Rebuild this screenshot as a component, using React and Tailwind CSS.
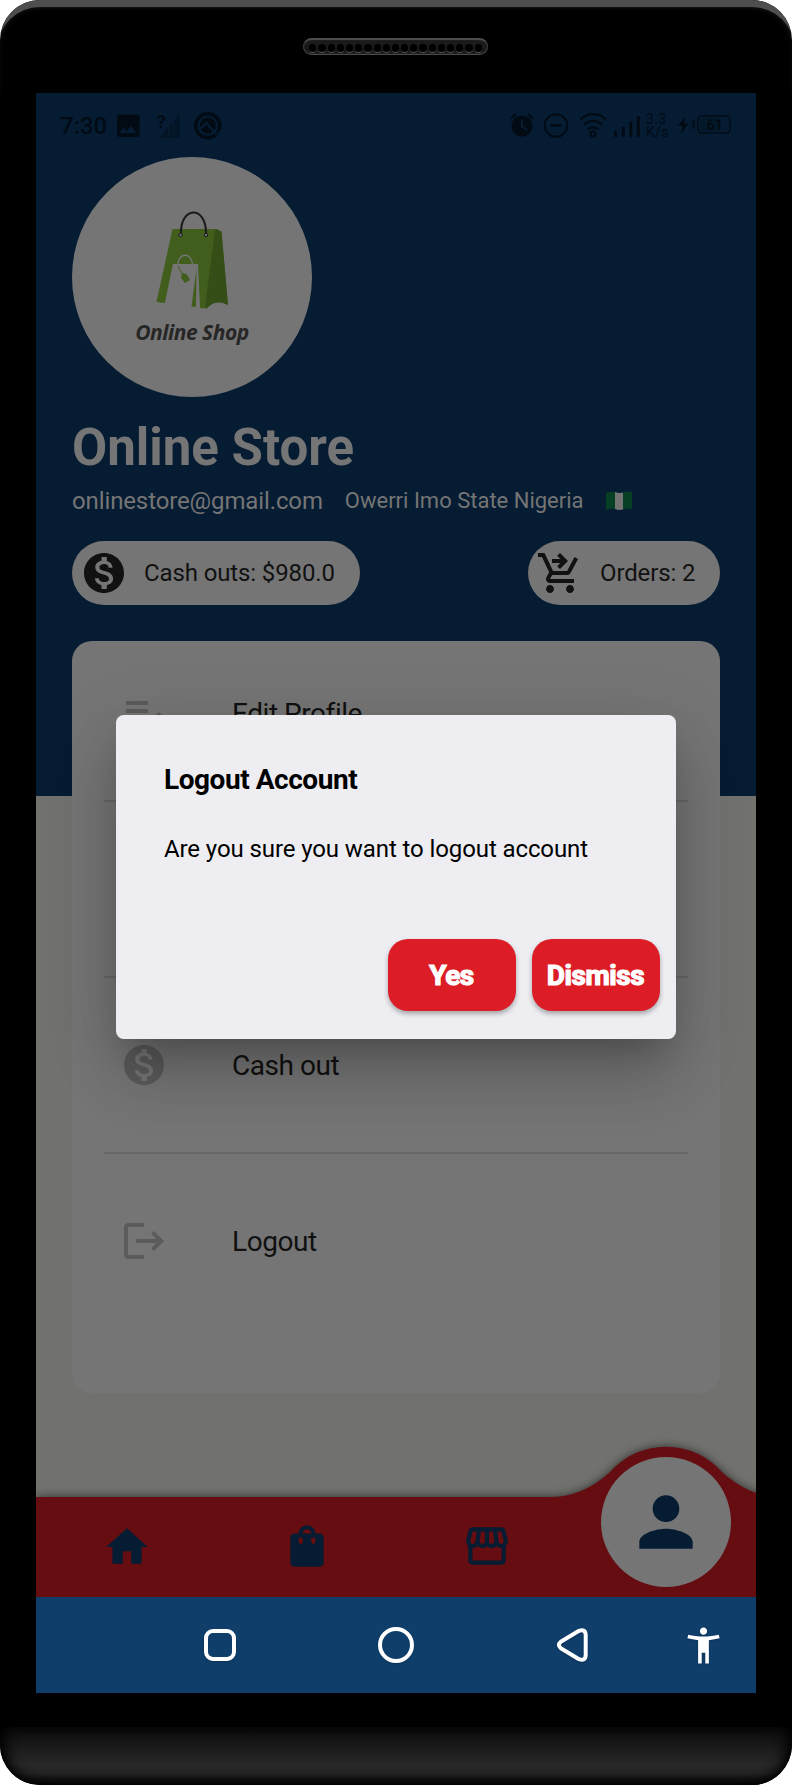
import React from "react";
import {
  MdMonetizationOn,
  MdShoppingCartCheckout,
  MdEditNote,
  MdLogout,
  MdHome,
  MdShoppingBag,
  MdOutlineStorefront,
  MdPerson,
  MdAccessibilityNew,
  MdSettings,
} from "react-icons/md";

function Speaker() {
  return (
    <div className="-ml-px flex h-[17px] w-[185px] items-center justify-center gap-[2px] rounded-full border-t-2 border-b border-t-[#4c4c4c] border-b-[#4a4a4a] bg-[#1a1a1a] pt-[2px] shadow-[inset_1px_0_1px_#3a3a3a,inset_-1px_0_1px_#3a3a3a]">
      {Array.from({ length: 19 }, (_, i) => (
        <span key={i} className="h-[9px] w-[7.2px] rounded-full border-b border-[#555555] bg-black" />
      ))}
    </div>
  );
}

function StatusBar() {
  return (
    <div className="flex h-16 items-center pt-px pr-[23px] pl-6 text-[#020b14]">
      <span className="w-[57px] text-[24px] leading-6 font-medium">7:30</span>
      <svg width="108" height="30" viewBox="117 110 108 30" fill="currentColor">
        <path fillRule="evenodd" d="M120 113.5h16.500a3 3 0 0 1 3 3v16.500a3 3 0 0 1-3 3h-16.500a3 3 0 0 1-3-3v-16.500a3 3 0 0 1 3-3zM119.500 132h17l-5.500-7-4.300 5.300-3-3.500z" />
        <path d="M158 137l21.500-23.500V137z" opacity=".45" />
        <path d="M163 137v-5.500M168.500 137v-11M174 137v-17" stroke="#051c33" strokeWidth="1.200" />
        <text x="156.500" y="127" fontSize="19" fontWeight="700" fontFamily="Roboto, sans-serif">?</text>
        <circle cx="207.800" cy="124.700" r="12" fill="none" stroke="currentColor" strokeWidth="3.400" />
        <circle cx="207.800" cy="124.500" r="8" />
        <path d="M199.500 128.500l6.800-6.500 9.500 10.500" fill="none" stroke="#051c33" strokeWidth="2.400" />
        <path d="M215 134.500l4.500-4" fill="none" stroke="#051c33" strokeWidth="1.200" />
      </svg>
      <svg className="ml-auto" width="132" height="30" viewBox="510 110 132 30" fill="none" stroke="currentColor">
        <circle cx="522" cy="125" r="10.500" fill="currentColor" stroke="none" />
        <path d="M522 118.500v7l5 3.500" stroke="#051c33" strokeWidth="2" />
        <path d="M511 117.500l5-4.500M533 117.500l-5-4.500" strokeWidth="2" />
        <circle cx="556" cy="124.500" r="11.300" strokeWidth="2" />
        <path d="M550 124.500h12" strokeWidth="2.400" />
        <path d="M580.500 118.500a18 18 0 0 1 25.500 0M584.500 123.500a12.500 12.500 0 0 1 17.500 0M588 128.500a7.500 7.500 0 0 1 10.500 0" strokeWidth="2.200" />
        <circle cx="593" cy="133" r="2.500" strokeWidth="2" />
        <path d="M615.500 131v3.500M623.300 127v7.500M630.800 122v12.500M638.300 116.500v18" strokeWidth="3" strokeLinecap="round" />
      </svg>
      <div className="ml-[4px] flex w-[26px] flex-col text-[14px] leading-[13px] tracking-[0.3px]">
        <span>3.3</span>
        <span>K/s</span>
      </div>
      <svg width="58" height="22" viewBox="675 114 58 22" fill="currentColor" className="-mt-px ml-[3px]">
        <path d="M685.500 116l-7.500 10h4.500l-1.500 8 7.500-10.500H684z" />
        <rect x="692" y="120" width="3" height="9" rx="1.500" opacity=".7" />
        <rect x="698" y="116" width="32" height="17" rx="3.500" fill="none" stroke="currentColor" strokeWidth="2" opacity=".7" />
        <rect x="700" y="118" width="21" height="13" opacity=".25" />
        <text x="706.500" y="129.500" fontSize="14" fontWeight="700" fontFamily="Roboto, sans-serif">61</text>
      </svg>
    </div>
  );
}

function Avatar() {
  return (
    <div className="flex h-60 w-60 flex-col items-center rounded-full bg-[#757575] pt-[52px]">
      <svg width="76" height="104" viewBox="154 209 76 104">
        <path d="M172.500 229H216l5.500 2.500L228 305q-12-7-21.500 3.500l-7-.5-2-44-24 0-8.500 39-8.500-1z" fill="#415e1d" />
        <path d="M217 229l-2 1-10 76 1.500 2.500Q216 298 228 305L221.500 232z" fill="#354e18" />
        <path d="M173 264h25l2 44h-4l-4-8-1 7.500H164z" fill="#757575" />
        <path d="M196.500 269l-5 37.500 4.500.5z" fill="#415e1d" />
        <path d="M178 267v-4c1-10 13-11 14.500 1v3" fill="none" stroke="#757575" strokeWidth="1.400" />
        <path d="M178 266l4 8" fill="none" stroke="#415e1d" strokeWidth="1" />
        <path d="M182 273l4.500 1 3.500 6-5 3-4-5z" fill="#415e1d" />
        <path d="M181 234c-1-28 25-29 25-1" fill="none" stroke="#1b1b1b" strokeWidth="2" />
        <circle cx="180.500" cy="235" r="1.700" fill="#757575" stroke="#1b1b1b" />
        <circle cx="206" cy="235" r="1.700" fill="#757575" stroke="#1b1b1b" />
      </svg>
      <span className="mt-[5px] font-['Open_Sans'] text-[21px] leading-7 font-bold tracking-[-0.5px] whitespace-nowrap text-[#262626] italic">Online Shop</span>
    </div>
  );
}

function Flag() {
  return (
    <svg width="26" height="20" viewBox="0 0 26 20" className="ml-[22px]">
      <path d="M0 2Q4 0 9 1V18Q4 17 0 19z" fill="#063f24" />
      <path d="M9 1Q13 2.500 17 1.500V18.500Q13 19.500 9 18z" fill="#737373" />
      <path d="M17 1.500Q22 0 26 1V18Q22 17 17 18.500z" fill="#063f24" />
    </svg>
  );
}

const rows = [
  { label: "Edit Profile", Icon: MdEditNote },
  { label: "Settings", Icon: MdSettings },
  { label: "Cash out", Icon: MdMonetizationOn },
  { label: "Logout", Icon: MdLogout },
];

function Menu() {
  return (
    <div className="mt-9 h-[752px] rounded-[20px] bg-[#757575] px-8 pt-12">
      {rows.map(({ label, Icon }, i) => (
        <div key={label} className={i ? "mt-[63px] border-t-2 border-[#676767] pt-[63px]" : ""}>
          <div className="flex h-12 items-center gap-16 pl-4">
            <Icon size={48} className="text-[#5b5b5b]" />
            <span className="pt-0.5 text-[28px] leading-8 tracking-[-0.45px] text-[#111111]">{label}</span>
          </div>
        </div>
      ))}
    </div>
  );
}

function TabBar() {
  return (
    <nav className="relative h-[100px] w-full">
      <svg className="absolute -top-[70px] left-0" width="720" height="170" viewBox="36 1427 720 170">
        <path
          d="M36 1497H550C578 1497 596 1484 609 1473A75 75 0 0 1 723 1473C736 1484 754 1497 782 1497V1597H36z"
          fill="#650d10"
          className="drop-shadow-[0_0_5px_rgba(0,0,0,0.6)]"
        />
      </svg>
      <div className="relative flex h-full text-[#051c33]">
        <div className="flex w-[182px] items-center justify-center pb-px"><MdHome size={50} /></div>
        <div className="flex w-[178px] items-center justify-center pb-[3px]"><MdShoppingBag size={50} /></div>
        <div className="flex w-[182px] items-center justify-center pb-[3px]"><MdOutlineStorefront size={50} /></div>
        <div className="-mt-10 ml-[23px] flex h-[130px] w-[130px] items-center justify-center rounded-full bg-[#757575]">
          <MdPerson size={80} />
        </div>
      </div>
    </nav>
  );
}

function SystemBar() {
  return (
    <div className="flex h-24 items-center bg-[#0f3e6b] text-white">
      <div className="ml-[168px] h-8 w-8 rounded-[9px] border-4 border-white shadow-[0_1px_2px_rgba(0,0,0,0.2)]" />
      <div className="ml-[142px] h-9 w-9 rounded-full border-4 border-white shadow-[0_1px_2px_rgba(0,0,0,0.2)]" />
      <svg className="ml-[140px] drop-shadow-[0_1px_1px_rgba(0,0,0,0.2)]" width="36" height="40" viewBox="0 0 36 40" fill="none" stroke="currentColor" strokeWidth="4" strokeLinejoin="round">
        <path d="M25 5.800L6.800 16.800Q3 20 6.800 23.200L25 34.200Q31.500 36.500 31.700 30V10Q31.500 3.500 25 5.800z" />
      </svg>
      <MdAccessibilityNew size={43} className="ml-[92px] drop-shadow-[0_1px_1px_rgba(0,0,0,0.2)]" />
    </div>
  );
}

function DialogButton({ children }) {
  return (
    <button className="h-[72px] w-32 rounded-[20px] bg-[#dc1d25] pt-0.5 pr-px text-center text-[28px] leading-8 font-bold tracking-[-0.45px] text-white shadow-[0_3px_5px_rgba(0,0,0,0.3)] [-webkit-text-stroke:1.2px_white]">
      {children}
    </button>
  );
}

function LogoutDialog() {
  return (
    <div className="absolute top-[622px] left-20 flex h-[324px] w-[560px] flex-col rounded-lg bg-[#eeedf2] pt-[49px] pr-4 pb-7 pl-12 text-black shadow-[0_22px_30px_-14px_rgba(0,0,0,0.2),0_40px_64px_0px_rgba(0,0,0,0.14),0_16px_76px_6px_rgba(0,0,0,0.1)]">
      <h2 className="text-[28px] leading-8 font-bold tracking-[-0.45px]">Logout Account</h2>
      <p className="mt-[39px] text-[24px] leading-7 tracking-[-0.1px]">Are you sure you want to logout account</p>
      <div className="mt-auto flex justify-end gap-4">
        <DialogButton>Yes</DialogButton>
        <DialogButton>Dismiss</DialogButton>
      </div>
    </div>
  );
}

export default function App() {
  return (
    <div className="h-[1785px] w-[792px] bg-white font-[Roboto,sans-serif]">
      <div className="flex h-full flex-col overflow-hidden rounded-[40px] bg-black">
        <header className="flex h-[93px] justify-center rounded-t-[40px] pt-[38px] shadow-[inset_0_10px_0_-3px_#4e4e4e,inset_0_9px_6px_-4px_#3c3c3c]">
          <Speaker />
        </header>
        <main className="relative mx-9 flex h-[1600px] flex-col bg-[linear-gradient(#051c33_703px,#71716e_703px)]">
          <StatusBar />
          <section className="flex flex-col px-9 text-[#757575]">
            <Avatar />
            <h1 className="mt-[21px] text-[51px] leading-[60px] font-bold">Online Store</h1>
            <div className="mt-[9px] flex h-7 items-center leading-7">
              <span className="text-[24px] tracking-[-0.12px]">onlinestore@gmail.com</span>
              <span className="ml-[22px] text-[22px]">Owerri Imo State Nigeria</span>
              <Flag />
            </div>
            <div className="mt-[26px] flex justify-between text-[24px] tracking-[-0.12px] text-[#111111]">
              <div className="flex h-16 w-72 items-center gap-4 rounded-full bg-[#757575] pl-2">
                <MdMonetizationOn size={48} />
                <span>Cash outs: $980.0</span>
              </div>
              <div className="flex h-16 w-48 items-center gap-4 rounded-full bg-[#757575] pl-2">
                <MdShoppingCartCheckout size={48} />
                <span>Orders: 2</span>
              </div>
            </div>
            <Menu />
          </section>
          <div className="mt-auto">
            <TabBar />
            <SystemBar />
          </div>
          <LogoutDialog />
        </main>
        <footer className="mt-[34px] h-[58px] rounded-b-[40px] bg-[linear-gradient(#0a0a0a,#282828_65%,#252525_80%,#0a0a0a)] shadow-[inset_0_-6px_14px_-4px_#000000,inset_12px_0_14px_-8px_#000000,inset_-12px_0_14px_-8px_#000000]" />
      </div>
    </div>
  );
}
